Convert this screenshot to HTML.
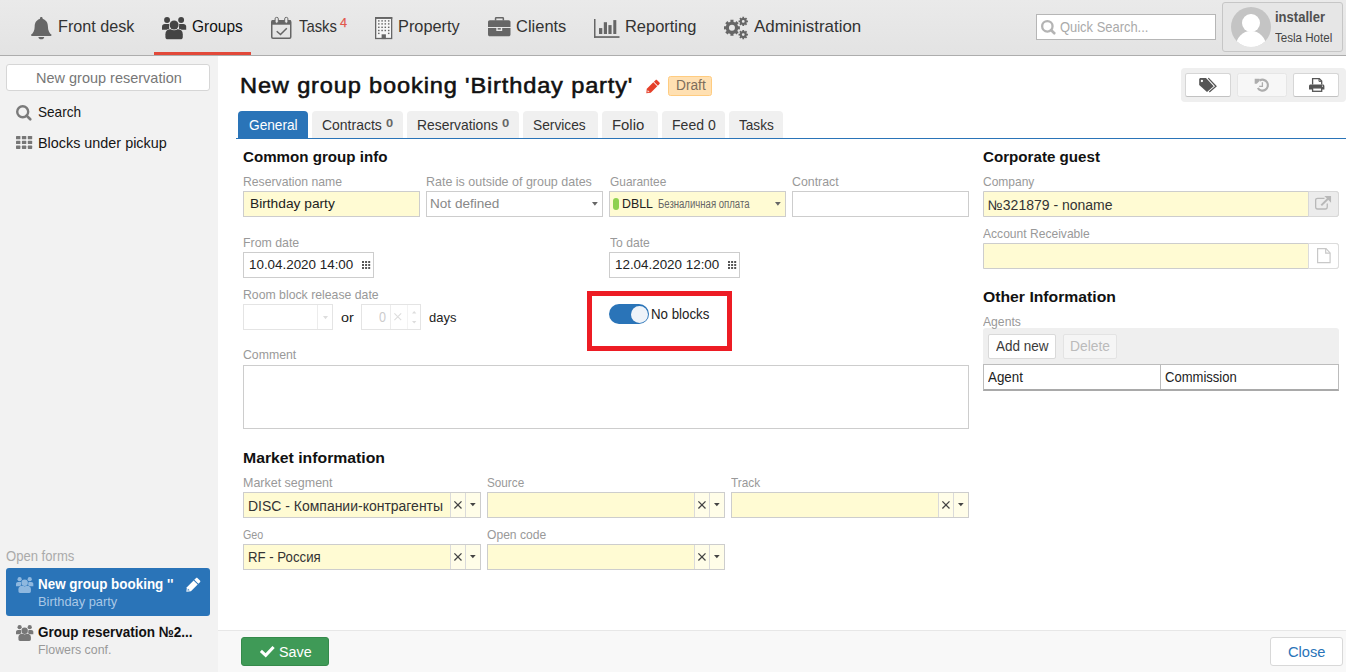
<!DOCTYPE html>
<html lang="en"><head><meta charset="utf-8"><title>New group booking</title>
<style>
html,body{margin:0;padding:0}
body{width:1346px;height:672px;position:relative;overflow:hidden;background:#fff;font-family:"Liberation Sans",sans-serif;color:#222}
.b{position:absolute;box-sizing:border-box}
.t{position:absolute;white-space:pre;line-height:1;transform-origin:0 50%;font-family:"Liberation Sans",sans-serif}
svg{position:absolute;overflow:visible}
#hdr{left:0;top:0;width:1346px;height:56px;background:linear-gradient(#eaeaea,#e3e3e3);border-bottom:1px solid #adadad}
#side{left:0;top:56px;width:218px;height:616px;background:#f2f2f2}
#foot{left:218px;top:630px;width:1128px;height:42px;background:#f8f8f8;border-top:1px solid #e7e7e7}
.inp{height:26px;border:1px solid #cdcdcd;background:#fff}
.y{background:#fffbd3}
.dis{border-color:#e4e4e4}
.tab{top:111px;height:27px;background:#f0f0f0;border-radius:4px 4px 0 0}
.sep{width:1px;background:#d9d9d9}

</style></head>
<body>
<div class="b" id="hdr"></div>
<div class="b" style="left:154px;top:52px;width:97px;height:3px;background:#e2493a"></div>
<div class="b" id="side"></div>
<div class="b" id="foot"></div>

<!-- header right -->
<div class="b" style="left:1036px;top:14px;width:180px;height:26px;background:#fff;border:1px solid #b6b6b6"></div>
<div class="b" style="left:1222px;top:2px;width:121px;height:50px;background:#e6e6e6;border:1px solid #c6c6c6;border-radius:3px"></div>
<div class="b" style="left:1231px;top:7px;width:40px;height:40px;border-radius:50%;background:#c4c4c4;overflow:hidden">
  <div class="b" style="left:10.8px;top:6.5px;width:18px;height:18.6px;border-radius:50%;background:#fff"></div>
  <div class="b" style="left:5px;top:24px;width:30px;height:30px;border-radius:50% 50% 0 0;background:#fff"></div>
</div>

<!-- sidebar -->
<div class="b" style="left:6px;top:64px;width:204px;height:27px;background:#fff;border:1px solid #d6d6d6;border-radius:3px"></div>
<div class="b" style="left:6px;top:568px;width:204px;height:48px;background:#2a74b8;border-radius:3px"></div>

<!-- action buttons -->
<div class="b" style="left:1181px;top:68px;width:164.5px;height:34px;background:#efefef;border-radius:4px"></div>
<div class="b" style="left:1185px;top:73px;width:45.5px;height:24px;background:#fff;border:1px solid #d6d6d6;border-bottom-color:#c2c2c2;border-radius:2.5px"></div>
<div class="b" style="left:1237px;top:73px;width:49.5px;height:24px;background:#f7f7f7;border:1px solid #e6e6e6;border-radius:2.5px"></div>
<div class="b" style="left:1293px;top:73px;width:45.5px;height:24px;background:#fff;border:1px solid #d6d6d6;border-bottom-color:#c2c2c2;border-radius:2.5px"></div>

<!-- draft badge -->
<div class="b" style="left:668px;top:76px;width:44px;height:20px;background:#ffe0b2;border:1px solid #ffcc80;border-radius:2.5px"></div>

<!-- tabs -->
<div class="b tab" style="left:238px;width:70px;background:#2a74b8"></div>
<div class="b tab" style="left:312px;width:91px"></div>
<div class="b tab" style="left:407px;width:112px"></div>
<div class="b tab" style="left:523px;width:75px"></div>
<div class="b tab" style="left:602px;width:56px"></div>
<div class="b tab" style="left:662px;width:63px"></div>
<div class="b tab" style="left:729px;width:54px"></div>
<div class="b" style="left:236px;top:137.5px;width:1110px;height:1.5px;background:#2a74b8"></div>

<!-- form row 1 -->
<div class="b inp y" style="left:243px;top:191px;width:177px"></div>
<div class="b inp" style="left:426px;top:191px;width:177px"></div>
<div class="b inp y" style="left:609px;top:191px;width:177px"></div>
<div class="b inp" style="left:792px;top:191px;width:177px"></div>
<div class="b" style="left:613px;top:198px;width:6px;height:12px;border-radius:3px;background:#8fd14f"></div>
<!-- row 2 -->
<div class="b inp" style="left:243px;top:252px;width:131px"></div>
<div class="b inp" style="left:609px;top:252px;width:131px"></div>
<!-- row 3 -->
<div class="b inp dis" style="left:243px;top:304px;width:90px"></div>
<div class="b sep" style="left:317px;top:305px;height:24px;background:#ececec"></div>
<div class="b inp dis" style="left:361px;top:304px;width:60px"></div>
<div class="b sep" style="left:390px;top:305px;height:24px;background:#ececec"></div>
<div class="b sep" style="left:407px;top:305px;height:24px;background:#f3f3f3"></div>
<!-- toggle + red rect -->
<div class="b" style="left:587px;top:291px;width:145px;height:60px;border:5px solid #ed1c24"></div>
<div class="b" style="left:609px;top:304px;width:40px;height:20px;border-radius:10px;background:#2a74b8"></div>
<div class="b" style="left:630.5px;top:305.5px;width:17px;height:17px;border-radius:50%;background:#eef3f9"></div>
<!-- comment -->
<div class="b inp" style="left:243px;top:365px;width:726px;height:64px"></div>

<!-- market combos -->
<div class="b inp y" style="left:243px;top:492px;width:238px"></div>
<div class="b inp y" style="left:487px;top:492px;width:238px"></div>
<div class="b inp y" style="left:731px;top:492px;width:238px"></div>
<div class="b inp y" style="left:243px;top:544px;width:238px"></div>
<div class="b inp y" style="left:487px;top:544px;width:238px"></div>

<!-- corporate -->
<div class="b inp y" style="left:983px;top:191px;width:356px;border-radius:0 3px 3px 0"></div>
<div class="b" style="left:1308px;top:191px;width:31px;height:26px;background:#ececec;border:1px solid #d8d8d8;border-radius:0 3px 3px 0"></div>
<div class="b inp y" style="left:983px;top:243px;width:356px;border-radius:0 3px 3px 0"></div>
<div class="b" style="left:1308px;top:243px;width:31px;height:26px;background:#fff;border:1px solid #dcdcdc;border-radius:0 3px 3px 0"></div>

<!-- agents -->
<div class="b" style="left:983px;top:328px;width:356px;height:37px;background:#efefef;border-radius:3px 3px 0 0"></div>
<div class="b" style="left:988px;top:333.5px;width:67.5px;height:25px;background:#fff;border:1px solid #d9d9d9;border-radius:2px"></div>
<div class="b" style="left:1062.5px;top:333.5px;width:54px;height:25px;background:#f5f5f5;border:1px solid #e3e3e3;border-radius:2px"></div>
<div class="b" style="left:983px;top:364px;width:356px;height:26.5px;background:#fff;border:1px solid #bcbcbc;border-bottom:2px solid #a9a9a9"></div>
<div class="b sep" style="left:1160px;top:365px;height:24px;background:#bcbcbc"></div>

<!-- footer buttons -->
<div class="b" style="left:241px;top:637px;width:88px;height:29px;background:#3f9a57;border:1px solid #358a4b;border-radius:3px"></div>
<div class="b" style="left:1270px;top:637px;width:73px;height:29px;background:#fff;border:1px solid #d8d8d8;border-radius:3px"></div>

<!-- icons -->
<svg style="left:30.6px;top:16.8px" width="20.6" height="22.3" viewBox="0 0 20.6 22.3"><path d="M10.3 0 C11.1 0 11.7 .6 11.7 1.4 V2 C14.9 2.7 16.9 5.6 16.9 9.2 C16.9 13.6 18.4 16.1 20.6 17.8 C20.6 18.6 20 19.1 19.2 19.1 H1.4 C.6 19.1 0 18.6 0 17.8 C2.2 16.1 3.7 13.6 3.7 9.2 C3.7 5.6 5.7 2.7 8.9 2 V1.4 C8.9 .6 9.5 0 10.3 0 Z M7.4 19.9 H13.2 C13.2 21.3 11.9 22.3 10.3 22.3 C8.7 22.3 7.4 21.3 7.4 19.9 Z" fill="#666"/></svg>
<svg style="left:161.8px;top:16.8px" width="24.20" height="22.30" viewBox="0 0 24.2 22.3"><path d="M0 12.8 V9.6 C0 8 1.2 6.9 2.8 6.9 H7.2 V12.8 Z" fill="#444"/><path d="M24.2 12.8 V9.6 C24.2 8 23 6.9 21.4 6.9 H17 V12.8 Z" fill="#444"/><circle cx="5.05" cy="3" r="2.95" fill="#444"/><circle cx="19.15" cy="3" r="2.95" fill="#444"/><path d="M3.4 20 V17.2 C3.4 14.2 5.4 12.3 8.3 12.3 H15.9 C18.8 12.3 20.8 14.2 20.8 17.2 V20 C20.8 21.4 19.9 22.3 18.5 22.3 H5.7 C4.3 22.3 3.4 21.4 3.4 20 Z" fill="#444" stroke="#e9e9e9" stroke-width="1.2" paint-order="stroke"/><circle cx="12.1" cy="8" r="4.5" fill="#444" stroke="#e9e9e9" stroke-width="1.3" paint-order="stroke"/></svg>
<svg style="left:271px;top:17px" width="20.5" height="22.1" viewBox="0 0 20.5 22.1"><rect x=".75" y="3.7" width="19" height="17.6" rx="1.2" fill="none" stroke="#666" stroke-width="1.5"/><rect x=".75" y="3.2" width="19" height="4.5" fill="#666"/><rect x="4.1" y=".4" width="3.2" height="5.8" rx="1.4" fill="#e9e9e9" stroke="#666" stroke-width="1"/><rect x="13.7" y=".4" width="3.2" height="5.8" rx="1.4" fill="#e9e9e9" stroke="#666" stroke-width="1"/><path d="M5.7 14.2 L9.5 17.5 L15.8 11.2" fill="none" stroke="#666" stroke-width="1.5"/></svg>
<svg style="left:374.9px;top:17px" width="17.3" height="22.1" viewBox="0 0 17.3 22.1"><rect x=".65" y=".9" width="16" height="20.6" fill="#f6f6f6" stroke="#666" stroke-width="1.3"/><rect x="0" y="0" width="17.3" height="1.9" fill="#666"/><rect x="3.05" y="3.20" width="1.5" height="1.4" fill="#666"/><rect x="6.35" y="3.20" width="1.5" height="1.4" fill="#666"/><rect x="9.55" y="3.20" width="1.5" height="1.4" fill="#666"/><rect x="12.95" y="3.20" width="1.5" height="1.4" fill="#666"/><rect x="3.05" y="6.20" width="1.5" height="1.4" fill="#666"/><rect x="6.35" y="6.20" width="1.5" height="1.4" fill="#666"/><rect x="9.55" y="6.20" width="1.5" height="1.4" fill="#666"/><rect x="12.95" y="6.20" width="1.5" height="1.4" fill="#666"/><rect x="3.05" y="9.60" width="1.5" height="1.4" fill="#666"/><rect x="6.35" y="9.60" width="1.5" height="1.4" fill="#666"/><rect x="9.55" y="9.60" width="1.5" height="1.4" fill="#666"/><rect x="12.95" y="9.60" width="1.5" height="1.4" fill="#666"/><rect x="3.05" y="12.80" width="1.5" height="1.4" fill="#666"/><rect x="6.35" y="12.80" width="1.5" height="1.4" fill="#666"/><rect x="9.55" y="12.80" width="1.5" height="1.4" fill="#666"/><rect x="12.95" y="12.80" width="1.5" height="1.4" fill="#666"/><rect x="3.05" y="15.70" width="1.5" height="1.4" fill="#666"/><rect x="12.95" y="15.70" width="1.5" height="1.4" fill="#666"/><rect x="6.6" y="17.3" width="4.3" height="4.8" fill="#666"/></svg>
<svg style="left:487.8px;top:16.8px" width="22.5" height="19.2" viewBox="0 0 22.5 19.2"><path d="M6.8 3.4 V1.4 C6.8 .6 7.4 0 8.2 0 H14.7 C15.5 0 16.1 .6 16.1 1.4 V3.4 H14.6 V1.5 H8.3 V3.4 Z" fill="#666"/><path d="M0 10 V5 C0 4 .8 3.2 1.8 3.2 H20.7 C21.7 3.2 22.5 4 22.5 5 V10 Z" fill="#666"/><path d="M0 11.1 H22.5 V17.4 C22.5 18.4 21.7 19.2 20.7 19.2 H1.8 C.8 19.2 0 18.4 0 17.4 Z" fill="#666"/><rect x="8.3" y="10" width="5.9" height="4" fill="#e9e9e9"/><rect x="9.7" y="11.1" width="3.1" height="1.5" fill="#666"/></svg>
<svg style="left:593.7px;top:18.9px" width="25.5" height="18.9" viewBox="0 0 25.5 18.9"><rect x="0" y="0" width="1.5" height="18.9" fill="#666"/><rect x="0" y="17.2" width="25.5" height="1.7" fill="#666"/><rect x="5" y="9.1" width="3.3" height="5.9" fill="#666"/><rect x="9.8" y="3.2" width="3.2" height="11.8" fill="#666"/><rect x="14.4" y="6.1" width="3.2" height="8.9" fill="#666"/><rect x="19.3" y="1.1" width="3" height="13.9" fill="#666"/></svg>
<svg style="left:723.85px;top:17px" width="24.3" height="22.3" viewBox="0 0 24.3 22.3"><path d="M14.08 9.33 L15.89 9.19 L15.89 12.41 L14.08 12.27 L13.32 14.09 L14.70 15.27 L12.42 17.55 L11.24 16.17 L9.42 16.93 L9.56 18.74 L6.34 18.74 L6.48 16.93 L4.66 16.17 L3.48 17.55 L1.20 15.27 L2.58 14.09 L1.82 12.27 L0.01 12.41 L0.01 9.19 L1.82 9.33 L2.58 7.51 L1.20 6.33 L3.48 4.05 L4.66 5.43 L6.48 4.67 L6.34 2.86 L9.56 2.86 L9.42 4.67 L11.24 5.43 L12.42 4.05 L14.70 6.33 L13.32 7.51 Z M10.95 10.80 A3.0 3.0 0 1 0 4.95 10.80 A3.0 3.0 0 1 0 10.95 10.80 Z M22.75 3.56 L23.95 3.45 L23.95 5.35 L22.75 5.24 L22.32 6.28 L23.25 7.05 L21.90 8.40 L21.13 7.47 L20.09 7.90 L20.20 9.10 L18.30 9.10 L18.41 7.90 L17.37 7.47 L16.60 8.40 L15.25 7.05 L16.18 6.28 L15.75 5.24 L14.55 5.35 L14.55 3.45 L15.75 3.56 L16.18 2.52 L15.25 1.75 L16.60 0.40 L17.37 1.33 L18.41 0.90 L18.30 -0.30 L20.20 -0.30 L20.09 0.90 L21.13 1.33 L21.90 0.40 L23.25 1.75 L22.32 2.52 Z M20.65 4.40 A1.4 1.4 0 1 0 17.85 4.40 A1.4 1.4 0 1 0 20.65 4.40 Z M22.75 16.76 L23.95 16.65 L23.95 18.55 L22.75 18.44 L22.32 19.48 L23.25 20.25 L21.90 21.60 L21.13 20.67 L20.09 21.10 L20.20 22.30 L18.30 22.30 L18.41 21.10 L17.37 20.67 L16.60 21.60 L15.25 20.25 L16.18 19.48 L15.75 18.44 L14.55 18.55 L14.55 16.65 L15.75 16.76 L16.18 15.72 L15.25 14.95 L16.60 13.60 L17.37 14.53 L18.41 14.10 L18.30 12.90 L20.20 12.90 L20.09 14.10 L21.13 14.53 L21.90 13.60 L23.25 14.95 L22.32 15.72 Z M20.65 17.60 A1.4 1.4 0 1 0 17.85 17.60 A1.4 1.4 0 1 0 20.65 17.60 Z" fill="#666" fill-rule="evenodd"/></svg>
<svg style="left:1041px;top:20.2px" width="15.6" height="15.6" viewBox="0 0 15.6 15.6"><circle cx="6.35" cy="6.35" r="5.2" fill="none" stroke="#b4b4b4" stroke-width="2.3"/><path d="M10.03 10.03 L13.28 13.28" stroke="#b4b4b4" stroke-width="2.5999999999999996" stroke-linecap="round"/></svg>
<svg style="left:15.7px;top:105.1px" width="16.7" height="16.7" viewBox="0 0 16.7 16.7"><circle cx="6.70" cy="6.70" r="5.5" fill="none" stroke="#7a7a7a" stroke-width="2.4"/><path d="M10.59 10.59 L14.27 14.27" stroke="#7a7a7a" stroke-width="2.6999999999999997" stroke-linecap="round"/></svg>
<svg style="left:15.9px;top:136.2px" width="16.2" height="12.9" viewBox="0 0 16.2 12.9"><rect x="0.00" y="0.00" width="4.4" height="3.3" rx=".6" fill="#777"/><rect x="5.90" y="0.00" width="4.4" height="3.3" rx=".6" fill="#777"/><rect x="11.80" y="0.00" width="4.4" height="3.3" rx=".6" fill="#777"/><rect x="0.00" y="4.80" width="4.4" height="3.3" rx=".6" fill="#777"/><rect x="5.90" y="4.80" width="4.4" height="3.3" rx=".6" fill="#777"/><rect x="11.80" y="4.80" width="4.4" height="3.3" rx=".6" fill="#777"/><rect x="0.00" y="9.60" width="4.4" height="3.3" rx=".6" fill="#777"/><rect x="5.90" y="9.60" width="4.4" height="3.3" rx=".6" fill="#777"/><rect x="11.80" y="9.60" width="4.4" height="3.3" rx=".6" fill="#777"/></svg>
<svg style="left:16.1px;top:577px" width="17.33" height="15.97" viewBox="0 0 24.2 22.3"><path d="M0 12.8 V9.6 C0 8 1.2 6.9 2.8 6.9 H7.2 V12.8 Z" fill="#8fb8df"/><path d="M24.2 12.8 V9.6 C24.2 8 23 6.9 21.4 6.9 H17 V12.8 Z" fill="#8fb8df"/><circle cx="5.05" cy="3" r="2.95" fill="#8fb8df"/><circle cx="19.15" cy="3" r="2.95" fill="#8fb8df"/><path d="M3.4 20 V17.2 C3.4 14.2 5.4 12.3 8.3 12.3 H15.9 C18.8 12.3 20.8 14.2 20.8 17.2 V20 C20.8 21.4 19.9 22.3 18.5 22.3 H5.7 C4.3 22.3 3.4 21.4 3.4 20 Z" fill="#8fb8df" stroke="#2a74b8" stroke-width="1.2" paint-order="stroke"/><circle cx="12.1" cy="8" r="4.5" fill="#8fb8df" stroke="#2a74b8" stroke-width="1.3" paint-order="stroke"/></svg>
<svg style="left:16.1px;top:625px" width="17.33" height="15.97" viewBox="0 0 24.2 22.3"><path d="M0 12.8 V9.6 C0 8 1.2 6.9 2.8 6.9 H7.2 V12.8 Z" fill="#777"/><path d="M24.2 12.8 V9.6 C24.2 8 23 6.9 21.4 6.9 H17 V12.8 Z" fill="#777"/><circle cx="5.05" cy="3" r="2.95" fill="#777"/><circle cx="19.15" cy="3" r="2.95" fill="#777"/><path d="M3.4 20 V17.2 C3.4 14.2 5.4 12.3 8.3 12.3 H15.9 C18.8 12.3 20.8 14.2 20.8 17.2 V20 C20.8 21.4 19.9 22.3 18.5 22.3 H5.7 C4.3 22.3 3.4 21.4 3.4 20 Z" fill="#777" stroke="#f2f2f2" stroke-width="1.2" paint-order="stroke"/><circle cx="12.1" cy="8" r="4.5" fill="#777" stroke="#f2f2f2" stroke-width="1.3" paint-order="stroke"/></svg>
<svg style="left:185.7px;top:577.6px" width="14.8" height="14.1" viewBox="0 0 14.2 13.6"><g transform="translate(.3 13.3) rotate(-45)"><path d="M0 0 L3.5 -2.8 H12.7 V2.8 H3.5 Z" fill="#fff"/><path d="M1.5 0 L3.3 -1.3 V1.3 Z" fill="#2a74b8" opacity=".8"/><path d="M13.6 -2.8 H15.8 C16.5 -2.8 17 -2.3 17 -1.6 V1.6 C17 2.3 16.5 2.8 15.8 2.8 H13.6 Z" fill="#fff"/></g></svg>
<svg style="left:645.6px;top:79.6px" width="14.2" height="13.6" viewBox="0 0 14.2 13.6"><g transform="translate(.3 13.3) rotate(-45)"><path d="M0 0 L3.5 -2.8 H12.7 V2.8 H3.5 Z" fill="#e5402a"/><path d="M1.5 0 L3.3 -1.3 V1.3 Z" fill="#fff" opacity=".8"/><path d="M13.6 -2.8 H15.8 C16.5 -2.8 17 -2.3 17 -1.6 V1.6 C17 2.3 16.5 2.8 15.8 2.8 H13.6 Z" fill="#e5402a"/></g></svg>
<svg style="left:1198.85px;top:77.9px" width="17.4" height="14" viewBox="0 0 17.4 14"><path d="M.2 1.6 C.2 .8 .8 .1 1.6 .1 H7 L14.7 8.3 L8 13.9 L.2 6.9 Z" fill="#555"/><circle cx="2.9" cy="3" r="1.15" fill="#fff"/><path d="M9.3 .1 L17 8.3 L10.3 13.9" fill="none" stroke="#555" stroke-width="1.3"/></svg>
<svg style="left:1255px;top:78px" width="14" height="14" viewBox="0 0 14 14"><path d="M4.56 2.53 A5.45 5.45 0 1 1 2.83 10.04" fill="none" stroke="#adadad" stroke-width="2.2"/><path d="M-.3 .8 H4.6 V3 L1.8 5.8 H-.3 Z" fill="#adadad"/><path d="M7.4 4.2 V8.3 H4.2" fill="none" stroke="#adadad" stroke-width="1.3"/></svg>
<svg style="left:1308.7px;top:78.1px" width="15.4" height="14" viewBox="0 0 15.4 14"><path d="M3.6 6.6 V.7 H10.3 L12.7 3.1 V6.6" fill="#fff" stroke="#555" stroke-width="1.3"/><path d="M10 .7 V3.4 H12.7" fill="none" stroke="#555" stroke-width="1"/><path d="M0 11.6 V8 C0 7.1 .7 6.4 1.6 6.4 H13.8 C14.7 6.4 15.4 7.1 15.4 8 V11.6 Z" fill="#555"/><rect x="3.6" y="9.9" width="9.1" height="3.4" fill="#fff" stroke="#555" stroke-width="1.3"/><circle cx="13.5" cy="8.1" r=".6" fill="#fff"/></svg>
<svg style="left:592.1px;top:202.1px" width="5.8" height="3.8" viewBox="0 0 5.8 3.8"><path d="M0 0 H5.8 L2.9 3.8 Z" fill="#666"/></svg>
<svg style="left:775.1px;top:202.1px" width="5.8" height="3.8" viewBox="0 0 5.8 3.8"><path d="M0 0 H5.8 L2.9 3.8 Z" fill="#666"/></svg>
<svg style="left:361.9px;top:261px" width="8.4" height="8.2" viewBox="0 0 8.4 8.2"><rect x="0.00" y="0.00" width="2" height="2" fill="#555"/><rect x="3.10" y="0.00" width="2" height="2" fill="#555"/><rect x="6.20" y="0.00" width="2" height="2" fill="#555"/><rect x="0.00" y="3.00" width="2" height="2" fill="#555"/><rect x="3.10" y="3.00" width="2" height="2" fill="#555"/><rect x="6.20" y="3.00" width="2" height="2" fill="#555"/><rect x="0.00" y="6.00" width="2" height="2" fill="#555"/><rect x="3.10" y="6.00" width="2" height="2" fill="#555"/><rect x="6.20" y="6.00" width="2" height="2" fill="#555"/></svg>
<svg style="left:727.9px;top:261px" width="8.4" height="8.2" viewBox="0 0 8.4 8.2"><rect x="0.00" y="0.00" width="2" height="2" fill="#555"/><rect x="3.10" y="0.00" width="2" height="2" fill="#555"/><rect x="6.20" y="0.00" width="2" height="2" fill="#555"/><rect x="0.00" y="3.00" width="2" height="2" fill="#555"/><rect x="3.10" y="3.00" width="2" height="2" fill="#555"/><rect x="6.20" y="3.00" width="2" height="2" fill="#555"/><rect x="0.00" y="6.00" width="2" height="2" fill="#555"/><rect x="3.10" y="6.00" width="2" height="2" fill="#555"/><rect x="6.20" y="6.00" width="2" height="2" fill="#555"/></svg>
<svg style="left:322.5px;top:315.5px" width="5" height="3.2" viewBox="0 0 5 3.2"><path d="M0 0 H5 L2.5 3.2 Z" fill="#ddd"/></svg>
<svg style="left:394.3px;top:313px" width="7.6" height="7.6" viewBox="0 0 7.6 7.6"><path d="M.4 .4 L7.199999999999999 7.199999999999999 M7.199999999999999 .4 L.4 7.199999999999999" stroke="#ddd" stroke-width="1.1" fill="none"/></svg>
<svg style="left:411.5px;top:310.5px" width="4.4" height="2.6" viewBox="0 0 4.4 2.6"><path transform="rotate(180 2.2 1.3)" d="M0 0 H4.4 L2.2 2.6 Z" fill="#ddd"/></svg>
<svg style="left:411.5px;top:321px" width="4.4" height="2.6" viewBox="0 0 4.4 2.6"><path d="M0 0 H4.4 L2.2 2.6 Z" fill="#ddd"/></svg>
<div class="b" style="left:450px;top:493px;width:30px;height:24px;background:#fffde8;border-left:1px solid #dadada"></div>
<div class="b sep" style="left:465px;top:493px;height:24px;background:#dadada"></div>
<svg style="left:453.9px;top:501.1px" width="7.9" height="7.9" viewBox="0 0 7.9 7.9"><path d="M.4 .4 L7.5 7.5 M7.5 .4 L.4 7.5" stroke="#444" stroke-width="1.3" fill="none"/></svg>
<svg style="left:470px;top:503px" width="5.7" height="3.2" viewBox="0 0 5.7 3.2"><path d="M0 0 H5.7 L2.85 3.2 Z" fill="#444"/></svg>
<div class="b" style="left:694px;top:493px;width:30px;height:24px;background:#fffde8;border-left:1px solid #dadada"></div>
<div class="b sep" style="left:709px;top:493px;height:24px;background:#dadada"></div>
<svg style="left:697.9px;top:501.1px" width="7.9" height="7.9" viewBox="0 0 7.9 7.9"><path d="M.4 .4 L7.5 7.5 M7.5 .4 L.4 7.5" stroke="#444" stroke-width="1.3" fill="none"/></svg>
<svg style="left:714px;top:503px" width="5.7" height="3.2" viewBox="0 0 5.7 3.2"><path d="M0 0 H5.7 L2.85 3.2 Z" fill="#444"/></svg>
<div class="b" style="left:938px;top:493px;width:30px;height:24px;background:#fffde8;border-left:1px solid #dadada"></div>
<div class="b sep" style="left:953px;top:493px;height:24px;background:#dadada"></div>
<svg style="left:941.9px;top:501.1px" width="7.9" height="7.9" viewBox="0 0 7.9 7.9"><path d="M.4 .4 L7.5 7.5 M7.5 .4 L.4 7.5" stroke="#444" stroke-width="1.3" fill="none"/></svg>
<svg style="left:958px;top:503px" width="5.7" height="3.2" viewBox="0 0 5.7 3.2"><path d="M0 0 H5.7 L2.85 3.2 Z" fill="#444"/></svg>
<div class="b" style="left:450px;top:545px;width:30px;height:24px;background:#fffde8;border-left:1px solid #dadada"></div>
<div class="b sep" style="left:465px;top:545px;height:24px;background:#dadada"></div>
<svg style="left:453.9px;top:553.1px" width="7.9" height="7.9" viewBox="0 0 7.9 7.9"><path d="M.4 .4 L7.5 7.5 M7.5 .4 L.4 7.5" stroke="#444" stroke-width="1.3" fill="none"/></svg>
<svg style="left:470px;top:555px" width="5.7" height="3.2" viewBox="0 0 5.7 3.2"><path d="M0 0 H5.7 L2.85 3.2 Z" fill="#444"/></svg>
<div class="b" style="left:694px;top:545px;width:30px;height:24px;background:#fffde8;border-left:1px solid #dadada"></div>
<div class="b sep" style="left:709px;top:545px;height:24px;background:#dadada"></div>
<svg style="left:697.9px;top:553.1px" width="7.9" height="7.9" viewBox="0 0 7.9 7.9"><path d="M.4 .4 L7.5 7.5 M7.5 .4 L.4 7.5" stroke="#444" stroke-width="1.3" fill="none"/></svg>
<svg style="left:714px;top:555px" width="5.7" height="3.2" viewBox="0 0 5.7 3.2"><path d="M0 0 H5.7 L2.85 3.2 Z" fill="#444"/></svg>
<svg style="left:1315.1px;top:196.2px" width="16.2" height="13.8" viewBox="0 0 16.2 13.8"><path d="M9.5 2.3 H2.6 C1.5 2.3 .65 3.1 .65 4.2 V11.1 C.65 12.2 1.5 13 2.6 13 H10.3 C11.4 13 12.25 12.2 12.25 11.1 V7.6" fill="none" stroke="#b8b8b8" stroke-width="1.3"/><path d="M6.3 9.4 L14 1.7" stroke="#b8b8b8" stroke-width="2" fill="none"/><path d="M9.4 0 H16.1 V6.7 Z" fill="#b8b8b8"/></svg>
<svg style="left:1317.1px;top:248.2px" width="13.7" height="15.3" viewBox="0 0 13.7 15.3"><path d="M.6 .6 H9 L13.1 4.9 V14.7 H.6 Z" fill="#fff" stroke="#c8c8c8" stroke-width="1.2"/><path d="M8.7 .6 V5.2 H13.1" fill="none" stroke="#c8c8c8" stroke-width="1.2"/></svg>
<svg style="left:259px;top:644.6px" width="16.5" height="12.5" viewBox="0 0 16.5 12.5"><path d="M1.9 5.9 L6.7 10.3 L14.6 2" fill="none" stroke="#fff" stroke-width="3.1"/></svg>
<!-- text layer -->
<span class="t" style="left:58.1px;top:17.6px;font-size:17px;color:#333;transform:scaleX(0.952);">Front desk</span>
<span class="t" style="left:191.9px;top:17.6px;font-size:17px;color:#111;transform:scaleX(0.912);">Groups</span>
<span class="t" style="left:299.2px;top:17.6px;font-size:17px;color:#333;transform:scaleX(0.873);">Tasks</span>
<span class="t" style="left:339.8px;top:17.3px;font-size:12px;color:#e2574c;transform:scaleX(1.047);-webkit-text-stroke:.25px #e2574c;">4</span>
<span class="t" style="left:398.1px;top:17.6px;font-size:17px;color:#333;transform:scaleX(0.960);">Property</span>
<span class="t" style="left:516.0px;top:17.6px;font-size:17px;color:#333;transform:scaleX(0.969);">Clients</span>
<span class="t" style="left:624.9px;top:17.6px;font-size:17px;color:#333;transform:scaleX(0.967);">Reporting</span>
<span class="t" style="left:753.7px;top:17.6px;font-size:17px;color:#333;transform:scaleX(0.996);">Administration</span>
<span class="t" style="left:1060.0px;top:19.3px;font-size:15px;color:#aaa;transform:scaleX(0.862);">Quick Search...</span>
<span class="t" style="left:1274.8px;top:9.6px;font-size:14.6px;font-weight:700;color:#505050;transform:scaleX(0.894);">installer</span>
<span class="t" style="left:1274.8px;top:31.6px;font-size:12px;color:#444;transform:scaleX(0.965);">Tesla Hotel</span>
<span class="t" style="left:35.8px;top:69.8px;font-size:15px;color:#777;transform:scaleX(0.966);">New group reservation</span>
<span class="t" style="left:37.9px;top:104.3px;font-size:15px;color:#151515;transform:scaleX(0.906);">Search</span>
<span class="t" style="left:37.9px;top:135.1px;font-size:15px;color:#151515;transform:scaleX(0.959);">Blocks under pickup</span>
<span class="t" style="left:5.9px;top:549.1px;font-size:14px;color:#aaa;transform:scaleX(0.934);">Open forms</span>
<span class="t" style="left:37.8px;top:575.8px;font-size:15px;font-weight:700;color:#fff;transform:scaleX(0.895);">New group booking &#x27;&#x27;</span>
<span class="t" style="left:37.9px;top:594.6px;font-size:13.5px;color:#a9c8e6;transform:scaleX(0.952);">Birthday party</span>
<span class="t" style="left:37.8px;top:624.3px;font-size:15px;font-weight:700;color:#111;transform:scaleX(0.900);">Group reservation №2...</span>
<span class="t" style="left:37.9px;top:642.6px;font-size:13.5px;color:#999;transform:scaleX(0.914);">Flowers conf.</span>
<span class="t" style="left:240.3px;top:75.0px;font-size:22.2px;color:#111;transform:scaleX(1.063);-webkit-text-stroke:.55px #111;letter-spacing:.8px;">New group booking &#x27;Birthday party&#x27;</span>
<span class="t" style="left:675.6px;top:79.3px;font-size:13.8px;color:#7d6e5c;transform:scaleX(0.993);">Draft</span>
<span class="t" style="left:248.6px;top:116.8px;font-size:15px;color:#fff;transform:scaleX(0.911);">General</span>
<span class="t" style="left:322.1px;top:116.8px;font-size:15px;color:#333;transform:scaleX(0.931);">Contracts</span>
<span class="t" style="left:386.1px;top:118.3px;font-size:11px;font-weight:700;color:#666;transform:scaleX(1.167);">0</span>
<span class="t" style="left:416.8px;top:116.8px;font-size:15px;color:#333;transform:scaleX(0.925);">Reservations</span>
<span class="t" style="left:502.0px;top:118.3px;font-size:11px;font-weight:700;color:#666;transform:scaleX(1.184);">0</span>
<span class="t" style="left:533.0px;top:116.8px;font-size:15px;color:#333;transform:scaleX(0.917);">Services</span>
<span class="t" style="left:612.0px;top:116.8px;font-size:15px;color:#333;transform:scaleX(0.992);">Folio</span>
<span class="t" style="left:671.5px;top:116.8px;font-size:15px;color:#333;transform:scaleX(0.937);">Feed 0</span>
<span class="t" style="left:738.5px;top:116.8px;font-size:15px;color:#333;transform:scaleX(0.906);">Tasks</span>
<span class="t" style="left:243.3px;top:149.5px;font-size:14.2px;font-weight:700;color:#111;transform:scaleX(1.066);">Common group info</span>
<span class="t" style="left:243.0px;top:174.5px;font-size:13px;color:#999;transform:scaleX(0.939);">Reservation name</span>
<span class="t" style="left:425.9px;top:174.5px;font-size:13px;color:#999;transform:scaleX(0.960);">Rate is outside of group dates</span>
<span class="t" style="left:609.5px;top:174.5px;font-size:13px;color:#999;transform:scaleX(0.916);">Guarantee</span>
<span class="t" style="left:792.1px;top:174.5px;font-size:13px;color:#999;transform:scaleX(0.949);">Contract</span>
<span class="t" style="left:249.9px;top:197.0px;font-size:13.6px;color:#222;transform:scaleX(1.011);">Birthday party</span>
<span class="t" style="left:430.2px;top:197.0px;font-size:13.6px;color:#888;transform:scaleX(0.998);">Not defined</span>
<span class="t" style="left:621.6px;top:197.0px;font-size:13.6px;color:#222;transform:scaleX(0.908);">DBLL</span>
<span class="t" style="left:657.5px;top:198.1px;font-size:12px;color:#666;transform:scaleX(0.797);">Безналичная оплата</span>
<span class="t" style="left:243.0px;top:235.5px;font-size:13px;color:#999;transform:scaleX(0.949);">From date</span>
<span class="t" style="left:609.5px;top:235.5px;font-size:13px;color:#999;transform:scaleX(0.932);">To date</span>
<span class="t" style="left:248.8px;top:258.0px;font-size:13.6px;color:#222;transform:scaleX(0.985);">10.04.2020 14:00</span>
<span class="t" style="left:614.8px;top:258.0px;font-size:13.6px;color:#222;transform:scaleX(0.985);">12.04.2020 12:00</span>
<span class="t" style="left:243.0px;top:287.5px;font-size:13px;color:#999;transform:scaleX(0.943);">Room block release date</span>
<span class="t" style="left:340.9px;top:310.5px;font-size:13.6px;color:#222;transform:scaleX(1.057);">or</span>
<span class="t" style="left:378.6px;top:310.1px;font-size:14px;color:#ccc;transform:scaleX(0.898);">0</span>
<span class="t" style="left:428.8px;top:310.5px;font-size:13.6px;color:#222;transform:scaleX(0.953);">days</span>
<span class="t" style="left:651.1px;top:306.3px;font-size:15px;color:#222;transform:scaleX(0.887);">No blocks</span>
<span class="t" style="left:243.0px;top:347.5px;font-size:13px;color:#999;transform:scaleX(0.945);">Comment</span>
<span class="t" style="left:243.3px;top:451.4px;font-size:14.2px;font-weight:700;color:#111;transform:scaleX(1.112);">Market information</span>
<span class="t" style="left:243.0px;top:475.5px;font-size:13px;color:#999;transform:scaleX(0.960);">Market segment</span>
<span class="t" style="left:487.1px;top:475.5px;font-size:13px;color:#999;transform:scaleX(0.902);">Source</span>
<span class="t" style="left:731.1px;top:475.5px;font-size:13px;color:#999;transform:scaleX(0.910);">Track</span>
<span class="t" style="left:248.0px;top:499.1px;font-size:14px;color:#333;transform:scaleX(0.998);">DISC - Компании-контрагенты</span>
<span class="t" style="left:243.0px;top:527.5px;font-size:13px;color:#999;transform:scaleX(0.824);">Geo</span>
<span class="t" style="left:487.1px;top:527.5px;font-size:13px;color:#999;transform:scaleX(0.930);">Open code</span>
<span class="t" style="left:248.0px;top:550.1px;font-size:14px;color:#333;transform:scaleX(0.944);">RF - Россия</span>
<span class="t" style="left:982.9px;top:150.0px;font-size:14.2px;font-weight:700;color:#111;transform:scaleX(1.068);">Corporate guest</span>
<span class="t" style="left:982.9px;top:174.5px;font-size:13px;color:#999;transform:scaleX(0.923);">Company</span>
<span class="t" style="left:987.8px;top:198.1px;font-size:14px;color:#333;transform:scaleX(1.000);">№321879 - noname</span>
<span class="t" style="left:982.9px;top:226.5px;font-size:13px;color:#999;transform:scaleX(0.929);">Account Receivable</span>
<span class="t" style="left:982.9px;top:290.0px;font-size:14.2px;font-weight:700;color:#111;transform:scaleX(1.110);">Other Information</span>
<span class="t" style="left:982.9px;top:314.5px;font-size:13px;color:#999;transform:scaleX(0.935);">Agents</span>
<span class="t" style="left:995.8px;top:338.7px;font-size:14.5px;color:#3a3a3a;transform:scaleX(0.931);">Add new</span>
<span class="t" style="left:1069.6px;top:338.7px;font-size:14.5px;color:#bbb;transform:scaleX(0.952);">Delete</span>
<span class="t" style="left:987.8px;top:370.1px;font-size:14px;color:#222;transform:scaleX(0.954);">Agent</span>
<span class="t" style="left:1164.8px;top:370.1px;font-size:14px;color:#222;transform:scaleX(0.932);">Commission</span>
<span class="t" style="left:278.6px;top:644.1px;font-size:15.2px;color:#fff;transform:scaleX(0.943);">Save</span>
<span class="t" style="left:1288.1px;top:644.1px;font-size:15.2px;color:#2a74b8;transform:scaleX(0.964);">Close</span>
</body></html>
